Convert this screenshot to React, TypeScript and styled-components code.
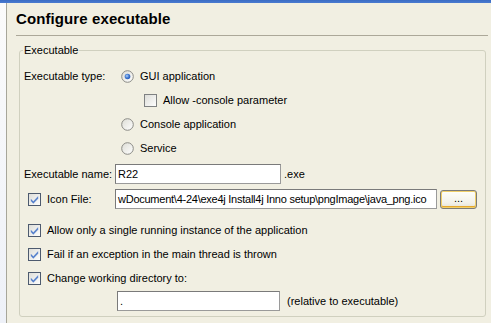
import React from "react";
import styled, { createGlobalStyle } from "styled-components";

const Global = createGlobalStyle`
  html, body { margin: 0; padding: 0; background: #f1efe2; }
  body { font-family: "Liberation Sans", Arial, sans-serif; font-size: 11px; color: #000; }
  * { box-sizing: border-box; }
`;

const Window = styled.div`
  width: 491px;
  height: 323px;
  display: flex;
  flex-direction: column;
  background: #f1efe2;
  overflow: hidden;
`;

const TopBar = styled.div`
  height: 3px;
  flex: none;
  background: linear-gradient(#3b6cc4, #4a7bd0);
`;

const Body = styled.div`
  flex: 1;
  display: flex;
`;

const SideStrip = styled.div`
  width: 7px;
  flex: none;
  background: linear-gradient(#fbfbfb, #eef1f8);
  border-right: 1px solid #a7a69a;
`;

const Content = styled.div`
  flex: 1;
  display: flex;
  flex-direction: column;
  padding: 6px 3px 0 9px;
`;

const Title = styled.h1`
  margin: 0;
  height: 20px;
  line-height: 20px;
  font-family: "Liberation Sans", Arial, sans-serif;
  font-weight: bold;
  font-size: 15px;
  letter-spacing: 0.1px;
`;

const Separator = styled.div`
  margin-top: 6px;
  height: 1px;
  background: #aca899;
`;

const Group = styled.div`
  position: relative;
  margin: 14px 2px 0 3px;
  height: 267px;
  border: 1px solid #d0d0bf;
  border-radius: 3px;
  padding: 13px 0 0 4px;
  display: flex;
  flex-direction: column;
`;

const Legend = styled.span`
  position: absolute;
  top: -8px;
  left: 3px;
  padding: 0 1px;
  line-height: 14px;
  background: #f1efe2;
`;

const Row = styled.div<{ $mt?: number; $h?: number; $indent?: number }>`
  display: flex;
  align-items: center;
  height: ${(p) => p.$h ?? 24}px;
  margin-top: ${(p) => p.$mt ?? 0}px;
  padding-left: ${(p) => p.$indent ?? 0}px;
  white-space: nowrap;
`;

const Label = styled.span<{ $w?: number }>`
  width: ${(p) => (p.$w ? `${p.$w}px` : "auto")};
  flex: none;
`;

const Option = styled.label`
  display: flex;
  align-items: center;
  gap: 6px;
`;

const CheckOption = styled.label<{ $w?: number }>`
  display: flex;
  align-items: center;
  gap: 6px;
  width: ${(p) => (p.$w ? `${p.$w}px` : "auto")};
  flex: none;
`;

const Input = styled.div<{ $w: number; $tight?: boolean }>`
  width: ${(p) => p.$w}px;
  height: 20px;
  flex: none;
  background: #fff;
  border: 1px solid #7a7a7a;
  border-right-color: #9a9a9a;
  border-bottom-color: #9a9a9a;
  padding: 0 2px;
  line-height: 18px;
  overflow: hidden;
  white-space: nowrap;
  letter-spacing: ${(p) => (p.$tight ? "-0.25px" : "normal")};
`;

const Suffix = styled.span<{ $ml: number }>`
  margin-left: ${(p) => p.$ml}px;
`;

const BrowseButton = styled.button`
  margin-left: 3px;
  width: 37px;
  height: 19px;
  flex: none;
  padding: 0 0 3px;
  border: 1px solid #7b7b7b;
  border-radius: 3px;
  background: linear-gradient(#fffffb, #f2f1ea 70%, #e3e1d6);
  box-shadow: inset 0 0 0 1px #f0cf6a, inset 0 -1px 0 1px #e5a82e;
  font-family: "Liberation Sans", Arial, sans-serif;
  font-size: 11px;
  color: #000;
  line-height: 14px;
`;

const Radio = ({ checked }: { checked?: boolean }) => (
  <svg width="13" height="13" viewBox="0 0 13 13">
    <defs>
      <linearGradient id={checked ? "rfc" : "rfu"} x1="0" y1="0" x2="1" y2="1">
        <stop offset="0" stopColor="#dcdcd5" />
        <stop offset="1" stopColor="#ffffff" />
      </linearGradient>
      <radialGradient id="rdot" cx="0.4" cy="0.4" r="0.6">
        <stop offset="0" stopColor="#b8d4f8" />
        <stop offset="0.5" stopColor="#4f86d8" />
        <stop offset="1" stopColor="#2457b8" />
      </radialGradient>
    </defs>
    <circle cx="6.5" cy="6.5" r="5.8" fill={`url(#${checked ? "rfc" : "rfu"})`} stroke="#8b8b86" strokeWidth="1" />
    {checked && <circle cx="6.5" cy="6.5" r="2.8" fill="url(#rdot)" />}
  </svg>
);

const Check = ({ checked }: { checked?: boolean }) => (
  <svg width="13" height="13" viewBox="0 0 13 13">
    <defs>
      <linearGradient id="cbf" x1="0" y1="0" x2="1" y2="1">
        <stop offset="0" stopColor="#dcdcd7" />
        <stop offset="1" stopColor="#ffffff" />
      </linearGradient>
    </defs>
    <rect x="0.5" y="0.5" width="12" height="12" fill="url(#cbf)" stroke={checked ? "#4d5a6e" : "#7f8182"} />
    {checked && (
      <path d="M3 6.2 L5.3 8.6 L10 3.6 L10 5.6 L5.3 10.4 L3 8.1 Z" fill="#4a78c8" stroke="#6f95d6" strokeWidth="0.4" />
    )}
  </svg>
);

export default function App() {
  return (
    <Window>
      <Global />
      <TopBar />
      <Body>
        <SideStrip />
        <Content>
          <Title>Configure executable</Title>
          <Separator />
          <Group>
            <Legend>Executable</Legend>
            <Row>
              <Label $w={97}>Executable type:</Label>
              <Option>
                <Radio checked />
                GUI application
              </Option>
            </Row>
            <Row $indent={120}>
              <CheckOption>
                <Check />
                Allow -console parameter
              </CheckOption>
            </Row>
            <Row $indent={97}>
              <Option>
                <Radio />
                Console application
              </Option>
            </Row>
            <Row $indent={97}>
              <Option>
                <Radio />
                Service
              </Option>
            </Row>
            <Row $mt={2}>
              <Label $w={91}>Executable name:</Label>
              <Input $w={166}>R22</Input>
              <Suffix $ml={3}>.exe</Suffix>
            </Row>
            <Row $mt={1} $indent={4}>
              <CheckOption $w={87}>
                <Check checked />
                Icon File:
              </CheckOption>
              <Input $w={322} $tight>wDocument\4-24\exe4j Install4j Inno setup\pngImage\java_png.ico</Input>
              <BrowseButton>...</BrowseButton>
            </Row>
            <Row $mt={7} $indent={4}>
              <CheckOption>
                <Check checked />
                Allow only a single running instance of the application
              </CheckOption>
            </Row>
            <Row $indent={4}>
              <CheckOption>
                <Check checked />
                Fail if an exception in the main thread is thrown
              </CheckOption>
            </Row>
            <Row $indent={4}>
              <CheckOption>
                <Check checked />
                Change working directory to:
              </CheckOption>
            </Row>
            <Row $mt={1} $h={20} $indent={93}>
              <Input $w={163}>.</Input>
              <Suffix $ml={7}>(relative to executable)</Suffix>
            </Row>
          </Group>
        </Content>
      </Body>
    </Window>
  );
}
